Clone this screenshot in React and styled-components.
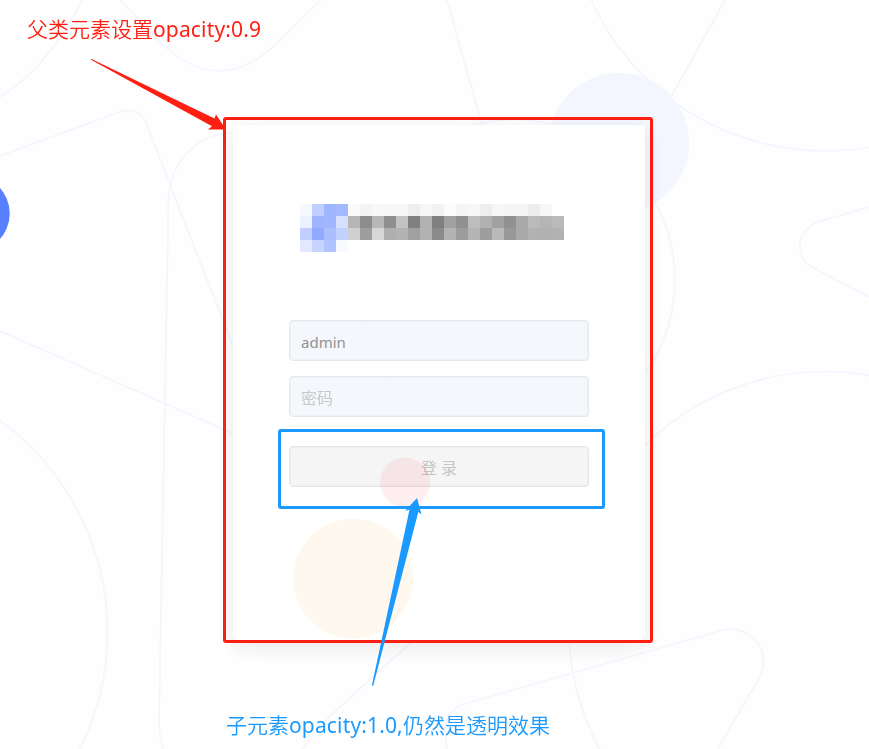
import React from 'react';
import styled, { createGlobalStyle } from 'styled-components';

const GlobalStyle = createGlobalStyle`
  * { box-sizing: border-box; }
  body { margin: 0; background: #fefefe; }
`;

const Page = styled.main`
  position: relative;
  width: 869px;
  height: 749px;
  padding: 125px 0 0 233px;
  overflow: hidden;
  background: #fefefe;
  font-family: 'Noto Sans', 'Noto Sans CJK SC', sans-serif;
`;

const Layer = styled.svg`
  position: absolute;
  inset: 0;
  pointer-events: none;
`;

const Card = styled.section`
  position: relative;
  display: flex;
  flex-direction: column;
  width: 412px;
  height: 516px;
  padding: 79px 56px 0;
  border-radius: 0 0 8px 8px;
  background: #fff;
  box-shadow: 0 6px 22px rgba(20, 25, 50, 0.1);
  opacity: 0.9;
`;

const Mosaic = styled.div`
  display: grid;
  grid-template-columns: repeat(22, 12px);
  grid-auto-rows: 12px;
  height: 48px;
  margin: 0 0 68px 11px;
`;

const Cell = styled.i`
  background: ${({ $color }) => $color};
`;

const Form = styled.form`
  display: flex;
  flex-direction: column;
  gap: 15px;
`;

const Field = styled.input`
  width: 300px;
  height: 41px;
  padding: 3px 11px 0;
  border: 1px solid #e3e5e7;
  border-radius: 4px;
  outline: 0;
  background: #f3f7fb;
  box-shadow: inset 0 0 0 1px #eef1f4;
  color: #858585;
  font: 15px 'Noto Sans', 'Noto Sans CJK SC', sans-serif;
  &::placeholder { color: #c0c2c4; font-size: 16px; opacity: 1; }
`;

const LoginButton = styled.button`
  width: 300px;
  height: 41px;
  margin-top: 14px;
  padding: 1px 0 0;
  border: 1px solid #e2e2e2;
  border-radius: 4px;
  background: #f4f4f4;
  box-shadow: inset 0 0 0 1px #f0f0f0;
  color: #bfbfbf;
  font: 16px 'Noto Sans', 'Noto Sans CJK SC', sans-serif;
`;

const Outline = styled.div`
  position: absolute;
  left: ${({ $x }) => $x}px;
  top: ${({ $y }) => $y}px;
  width: ${({ $w }) => $w}px;
  height: ${({ $h }) => $h}px;
  border: 3px solid ${({ $color }) => $color};
  border-radius: 3px;
  pointer-events: none;
`;

const Note = styled.p`
  position: absolute;
  left: ${({ $x }) => $x}px;
  top: ${({ $y }) => $y}px;
  margin: 0;
  color: ${({ $color }) => $color};
  font: 350 21px/30px 'Noto Sans CJK SC', sans-serif;
  white-space: nowrap;
`;

const Latin = styled.span`
  font: 400 21px/30px 'Noto Sans', sans-serif;
  letter-spacing: 0.15px;
`;

const RED = '#ff1e12';
const BLUE = '#1a9aff';

const hex = (v) => `#${v}${v}${v}`;
const grays = (s) => s.split(' ').map(hex);
const logoRows = [
  ['#f5f8ff', '#b9caff', '#94adff', '#99b2ff'],
  ['#e9f0ff', '#94acff', '#96afff', '#d2ddff'],
  ['#b9caff', '#85a0ff', '#a2b8ff', '#bbccff'],
  ['#dfe6ff', '#c0d0ff', '#a8beff', '#f7faff'],
];
const nameRows = [
  grays('fa f3 f8 f6 f6 ed f7 f1 fb f4 f7 ed f7 f4 f4 eb f7 fe'),
  grays('ae 81 b0 83 bc 72 aa 72 96 84 b6 a7 97 85 a0 b4 ad b3'),
  grays('cb 92 d3 a6 ab 96 aa 7e ab 91 ac 94 b1 8d a0 aa a9 aa'),
  Array(18).fill('#ffffff'),
];
const cells = logoRows.flatMap((row, i) => [...row, ...nameRows[i]]);

const curves = [
  'M82 0C67 31 40 72 0 97',
  'M120 0L160 42C200 81 239 79 275 45L321 0',
  'M0 156L118 112.5C132 107 142 112 147 125L195 249L256 404C263 424 252 438 232 433L0 331',
  'M163 749Q159 735 159 721L168.5 200C170 158 199 134 236 132C276 134 302 174 330 205',
  'M447 0L482 125L510 220',
  'M725 0L671 97',
  'M869 207L818 222C794 231 796 259 812 267L869 297',
  'M302 749Q320 725 340 707L410 643L550 518L645 430',
  'M447 749L445 732C444 718 454 706 467 703L720 631C749 622 774 650 759 678L718 749',
];

function Backdrop() {
  return (
    <Layer width="869" height="749" viewBox="0 0 869 749" aria-hidden="true">
      <circle cx="619" cy="143" r="70" fill="#f3f5ff" />
      <circle cx="-28.7" cy="213.5" r="38.4" fill="#587fff" />
      <circle cx="405" cy="482.5" r="25" fill="#ff5f69" />
      <circle cx="353" cy="578.5" r="60" fill="#ffb95f" />
      <g fill="none" stroke="#f3f5ff" strokeWidth="1.7">
        {curves.map((d) => <path key={d} d={d} />)}
        <circle cx="514.5" cy="280" r="160.5" />
        <circle cx="825" cy="-105.5" r="256.5" />
        <circle cx="825" cy="627.5" r="256" />
        <circle cx="-154.5" cy="632" r="262" />
      </g>
    </Layer>
  );
}

function Arrows() {
  return (
    <Layer width="869" height="749" viewBox="0 0 869 749" aria-hidden="true">
      <path fill={RED} d="M91 58.7L214.5 118.5L216 114.5L226 129.5H208L212 126.3L91 59.7Z" />
      <path fill={BLUE} d="M417 498L421.5 514.5L418.3 512L373.2 685.7L371.9 685.4L409.5 509.5L405 511Z" />
    </Layer>
  );
}

export default function App() {
  return (
    <>
      <GlobalStyle />
      <Page>
        <Backdrop />
        <Card>
          <Mosaic>
            {cells.map((color, i) => <Cell key={i} $color={color} />)}
          </Mosaic>
          <Form>
            <Field defaultValue="admin" aria-label="用户名" />
            <Field type="password" placeholder="密码" />
            <LoginButton type="button">登 录</LoginButton>
          </Form>
        </Card>
        <Outline $x={223} $y={117} $w={430} $h={526} $color={RED} />
        <Outline $x={278} $y={429} $w={327} $h={80} $color={BLUE} />
        <Arrows />
        <Note $x={27} $y={13} $color={RED}>父类元素设置<Latin>opacity:0.9</Latin></Note>
        <Note $x={226} $y={709} $color={BLUE}>子元素<Latin>opacity:1.0,</Latin>仍然是透明效果</Note>
      </Page>
    </>
  );
}
